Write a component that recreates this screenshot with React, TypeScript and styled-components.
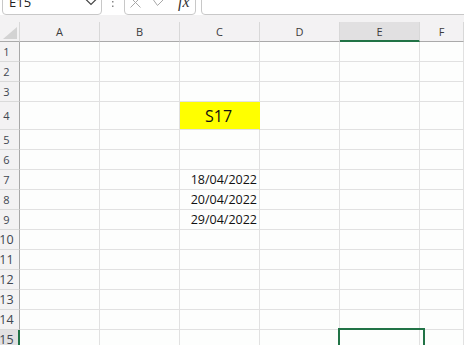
import React from "react";
import styled, { createGlobalStyle, css } from "styled-components";

const GlobalStyle = createGlobalStyle`
  html, body { margin: 0; padding: 0; background: #ffffff; overflow: hidden; }
  body { font-family: "Open Sans", "Noto Sans", sans-serif; }
  * { box-sizing: border-box; }
`;

const GREEN = "#217346";
const HEADER_BG = "#f3f2f3";
const HEADER_SEL = "#e1e0e1";
const GRID = "#e1e1e1";

const Page = styled.div`
  width: 464px;
  height: 345px;
  overflow: hidden;
  display: flex;
  flex-direction: column;
  background: #fdfefd;
`;

const Toolbar = styled.div`
  height: 15px;
  flex: none;
  overflow: hidden;
  display: flex;
  align-items: flex-end;
  padding-left: 2px;
  background: #ffffff;
`;

const Box = styled.div<{ $w?: number; $grow?: boolean }>`
  height: 30px;
  flex: ${(p) => (p.$grow ? "1 0 auto" : "none")};
  width: ${(p) => (p.$w ? `${p.$w}px` : "auto")};
  border: 1px solid #c8c8c8;
  border-radius: 4px;
  background: #ffffff;
  display: flex;
  align-items: center;
  padding-top: 4px;
`;

const NameText = styled.span`
  font-size: 13px;
  color: #222;
  padding-left: 6px;
  flex: 1;
`;

const Chevron = styled.svg`
  margin-right: 4px;
`;

const Colon = styled.svg`
  margin: 0 10px 0 10px;
  align-self: flex-start;
  margin-top: 1px;
`;

const FxIcons = styled.div`
  display: flex;
  align-items: center;
  gap: 12px;
  padding-left: 5px;
`;

const FxText = styled.span`
  font-family: "Liberation Serif", serif;
  font-style: italic;
  font-size: 16px;
  color: #333;
  margin-left: 1px;
`;

const FormulaBar = styled(Box)`
  margin-left: 5px;
  margin-right: -10px;
`;

const Band = styled.div`
  height: 7px;
  flex: none;
  background: ${HEADER_BG};
`;

const Row = styled.div<{ $h: number }>`
  display: grid;
  grid-template-columns: 20px repeat(5, 80px) 1fr;
  height: ${(p) => p.$h}px;
  flex: none;
`;

const ColHead = styled.div<{ $sel?: boolean }>`
  background: ${(p) => (p.$sel ? HEADER_SEL : HEADER_BG)};
  border-right: 1px solid #d8d8d8;
  border-bottom: ${(p) => (p.$sel ? `2px solid ${GREEN}` : "1px solid #aaaaaa")};
  display: flex;
  align-items: center;
  justify-content: center;
  font-size: 11px;
  color: #3c3c3c;
  padding-top: ${(p) => (p.$sel ? "1px" : "0")};
`;

const Corner = styled.div`
  background: ${HEADER_BG};
  border-right: 1px solid #d8d8d8;
  border-bottom: 1px solid #aaaaaa;
  display: flex;
  align-items: flex-end;
  justify-content: flex-end;
  padding: 0 2px 2px 0;
`;

const RowHead = styled.div<{ $sel?: boolean }>`
  background: ${(p) => (p.$sel ? HEADER_SEL : HEADER_BG)};
  border-right: ${(p) => (p.$sel ? `2px solid ${GREEN}` : "1px solid #a8a8a8")};
  border-bottom: 1px solid #dadada;
  display: flex;
  align-items: center;
`;

const RowNum = styled.span<{ $big?: boolean }>`
  width: 13px;
  text-align: center;
  font-size: ${(p) => (p.$big ? "12.5px" : "11px")};
  color: #404650;
  white-space: nowrap;
  display: flex;
  justify-content: center;
`;

const Cell = styled.div<{ $fill?: string; $sel?: boolean; $align?: "right" | "center" }>`
  position: relative;
  background: ${(p) => p.$fill ?? "transparent"};
  border-right: 1px solid ${(p) => p.$fill ?? GRID};
  border-bottom: 1px solid ${GRID};
  display: flex;
  align-items: center;
  justify-content: ${(p) => (p.$align === "center" ? "center" : "flex-end")};
  padding-right: 2px;
  font-size: 12.5px;
  color: #111;
  ${(p) =>
    p.$sel &&
    css`
      &::after {
        content: "";
        position: absolute;
        left: -2px;
        top: -2px;
        width: 83px;
        height: 40px;
        border: 2px solid ${GREEN};
      }
    `}
`;

const BigText = styled.span`
  font-size: 16px;
  padding-top: 1px;
  color: #111;
`;

const cols = ["A", "B", "C", "D", "E", "F"];

type RowDef = { n: number; h: number; c?: React.ReactNode; fill?: string; center?: boolean };

const rows: RowDef[] = [
  { n: 1, h: 20 },
  { n: 2, h: 20 },
  { n: 3, h: 20 },
  { n: 4, h: 28, c: <BigText>S17</BigText>, fill: "#ffff00", center: true },
  { n: 5, h: 20 },
  { n: 6, h: 20 },
  { n: 7, h: 20, c: "18/04/2022" },
  { n: 8, h: 20, c: "20/04/2022" },
  { n: 9, h: 20, c: "29/04/2022" },
  { n: 10, h: 20 },
  { n: 11, h: 20 },
  { n: 12, h: 20 },
  { n: 13, h: 20 },
  { n: 14, h: 20 },
  { n: 15, h: 20 },
];

export default function App() {
  return (
    <>
      <GlobalStyle />
      <Page>
        <Toolbar>
          <Box $w={100}>
            <NameText>E15</NameText>
            <Chevron width="12" height="8" viewBox="0 0 12 8">
              <polyline points="1,1.5 6,6.5 11,1.5" fill="none" stroke="#444" strokeWidth="1.2" />
            </Chevron>
          </Box>
          <Colon width="2" height="8" viewBox="0 0 2 8">
            <rect x="0" y="0" width="1.5" height="1.5" fill="#888" />
            <rect x="0" y="4.5" width="1.5" height="1.5" fill="#888" />
          </Colon>
          <Box $w={72}>
            <FxIcons>
              <svg width="11" height="11" viewBox="0 0 11 11">
                <path d="M0.5 0.5 L10.5 10.5 M10.5 0.5 L0.5 10.5" stroke="#a8a8a8" strokeWidth="1" fill="none" />
              </svg>
              <svg width="12" height="9" viewBox="0 0 12 9">
                <polyline points="0.5,2 4.5,7.5 11.5,0.5" stroke="#a8a8a8" strokeWidth="1" fill="none" />
              </svg>
              <FxText>fx</FxText>
            </FxIcons>
          </Box>
          <FormulaBar $grow />
        </Toolbar>
        <Band />
        <Row $h={20}>
          <Corner>
            <svg width="14" height="12" viewBox="0 0 14 12">
              <polygon points="14,0 14,12 0,12" fill="#d3d3d3" />
            </svg>
          </Corner>
          {cols.map((c) => (
            <ColHead key={c} $sel={c === "E"}>
              {c}
            </ColHead>
          ))}
        </Row>
        {rows.map((r) => (
          <Row key={r.n} $h={r.h}>
            <RowHead $sel={r.n === 15}>
              <RowNum $big={r.n >= 10}>{r.n}</RowNum>
            </RowHead>
            {cols.map((c) => {
              const isC = c === "C";
              return (
                <Cell
                  key={c}
                  $fill={isC ? r.fill : undefined}
                  $align={isC && r.center ? "center" : "right"}
                  $sel={r.n === 15 && c === "E"}
                >
                  {isC ? r.c : null}
                </Cell>
              );
            })}
          </Row>
        ))}
      </Page>
    </>
  );
}
